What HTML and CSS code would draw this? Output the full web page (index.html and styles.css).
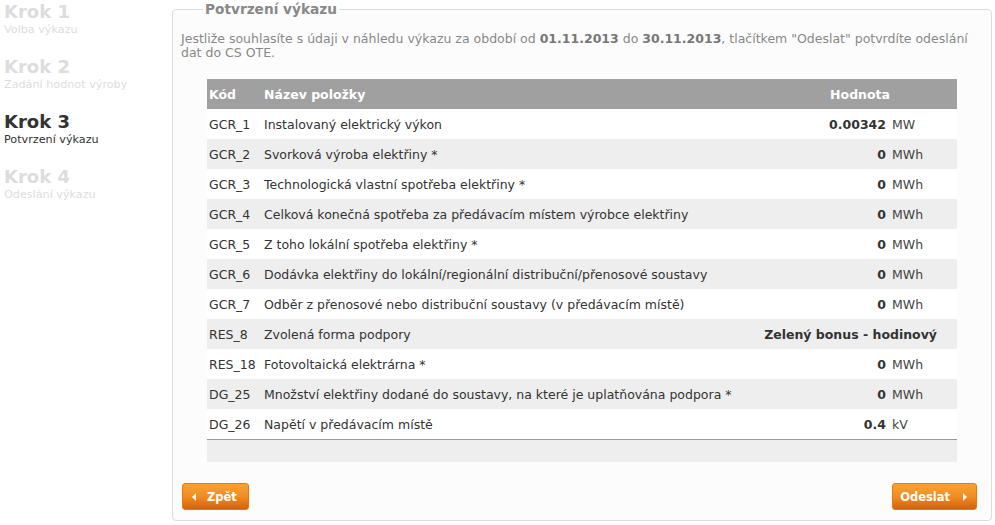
FILE: index.html
```html
<!DOCTYPE html>
<html lang="cs">
<head>
  <meta charset="UTF-8">
  <title>Potvrzení výkazu</title>
  <link rel="stylesheet" href="styles.css">
</head>
<body>
  <div class="page">

    <ul class="steps">
      <li class="step"><span class="step-title">Krok 1</span><span class="step-sub">Volba výkazu</span></li>
      <li class="step"><span class="step-title">Krok 2</span><span class="step-sub">Zadání hodnot výroby</span></li>
      <li class="step active"><span class="step-title">Krok 3</span><span class="step-sub">Potvrzení výkazu</span></li>
      <li class="step"><span class="step-title">Krok 4</span><span class="step-sub">Odeslání výkazu</span></li>
    </ul>

    <fieldset class="box">
      <legend>Potvrzení výkazu</legend>
      <p class="intro">Jestliže souhlasíte s údaji v náhledu výkazu za období od <b>01.11.2013</b> do <b>30.11.2013</b>, tlačítkem "Odeslat" potvrdíte odeslání dat do CS OTE.</p>

      <table class="report">
        <thead>
          <tr>
            <th class="code">Kód</th>
            <th>Název položky</th>
            <th class="val-head" colspan="2">Hodnota</th>
          </tr>
        </thead>
        <tbody>
          <tr><td>GCR_1</td><td>Instalovaný elektrický výkon</td><td class="num">0.00342</td><td class="unit">MW</td></tr>
          <tr><td>GCR_2</td><td>Svorková výroba elektřiny *</td><td class="num">0</td><td class="unit">MWh</td></tr>
          <tr><td>GCR_3</td><td>Technologická vlastní spotřeba elektřiny *</td><td class="num">0</td><td class="unit">MWh</td></tr>
          <tr><td>GCR_4</td><td>Celková konečná spotřeba za předávacím místem výrobce elektřiny</td><td class="num">0</td><td class="unit">MWh</td></tr>
          <tr><td>GCR_5</td><td>Z toho lokální spotřeba elektřiny *</td><td class="num">0</td><td class="unit">MWh</td></tr>
          <tr><td>GCR_6</td><td>Dodávka elektřiny do lokální/regionální distribuční/přenosové soustavy</td><td class="num">0</td><td class="unit">MWh</td></tr>
          <tr><td>GCR_7</td><td>Odběr z přenosové nebo distribuční soustavy (v předávacím místě)</td><td class="num">0</td><td class="unit">MWh</td></tr>
          <tr><td>RES_8</td><td>Zvolená forma podpory</td><td class="num text" colspan="2">Zelený bonus - hodinový</td></tr>
          <tr><td>RES_18</td><td>Fotovoltaická elektrárna *</td><td class="num">0</td><td class="unit">MWh</td></tr>
          <tr><td>DG_25</td><td>Množství elektřiny dodané do soustavy, na které je uplatňována podpora *</td><td class="num">0</td><td class="unit">MWh</td></tr>
          <tr><td>DG_26</td><td>Napětí v předávacím místě</td><td class="num">0.4</td><td class="unit">kV</td></tr>
        </tbody>
        <tfoot>
          <tr><td colspan="4"></td></tr>
        </tfoot>
      </table>

      <div class="actions">
        <button type="button" class="button back"><span class="arrow left"></span>Zpět</button>
        <button type="button" class="button next">Odeslat<span class="arrow right"></span></button>
      </div>
    </fieldset>

  </div>
</body>
</html>
```

FILE: styles.css
```css
body {
  font-family: "DejaVu Sans", Verdana, sans-serif;
  font-size: 12.5px;
  color: #333;
  background-color: #fff;
}
body, html {
  margin: 0;
  padding: 0;
}
.page {
  display: flex;
  height: 525px;
  box-sizing: border-box;
  padding: 0 3px 4px 0;
}
.steps {
  list-style: none;
  margin: 0;
  padding: 1px 0 0 4px;
  width: 168px;
}
.step {
  display: flex;
  flex-direction: column;
  height: 55px;
  color: #ddd;
}
.step-title {
  font-size: 18px;
  font-weight: bold;
  line-height: 22px;
}
.step-sub {
  font-size: 11.2px;
  line-height: 13px;
}
.step.active {
  color: #333;
}
.box {
  flex: 1;
  margin: 1px 0 0 0;
  padding: 0 14px 10px 8px;
  border: 1px solid #ddd;
  border-radius: 4px;
  background-color: #fcfcfc;
  display: flex;
  flex-direction: column;
  min-width: 0;
}
.box legend {
  margin-left: 22px;
  padding: 0 2px;
  font-size: 13.7px;
  font-weight: bold;
  color: #888;
}
.intro {
  margin: 15px -6px 0 0;
  font-size: 12.5px;
  line-height: 14px;
  color: #888;
}
.intro b {
  color: #777;
}
.report {
  margin: 19px 0 0 26px;
  width: 750px;
  border-collapse: collapse;
  font-size: 12.5px;
}
.report th {
  background-color: #a0a0a0;
  color: #fff;
  font-weight: bold;
  text-align: left;
  height: 30px;
  padding: 0 2px;
}
.report th.code {
  width: 51px;
}
.report th.val-head {
  text-align: right;
  padding-right: 67px;
}
.report td {
  height: 30px;
  padding: 0 2px;
  white-space: nowrap;
}
.report tbody tr:nth-child(even) td {
  background-color: #eee;
}
.report tbody tr:nth-child(odd) td {
  background-color: #fff;
}
.report td.num {
  text-align: right;
  font-weight: bold;
}
.report td.unit {
  width: 63px;
  padding-left: 4px;
  color: #444;
}
.report td.text {
  padding-right: 20px;
}
.report tfoot td {
  height: 22px;
  background-color: #eee;
  border-top: 1px solid #999;
}
.actions {
  margin-top: auto;
  display: flex;
  justify-content: space-between;
  padding-left: 1px;
}
.button {
  display: flex;
  align-items: center;
  gap: 11px;
  height: 27px;
  padding: 0 9px;
  border: 1px solid #e57b12;
  border-radius: 3px;
  background: linear-gradient(#f9a233, #f18d23 50%, #d5600c);
  color: #fff;
  font-family: "DejaVu Sans", Verdana, sans-serif;
  font-size: 11.5px;
  font-weight: bold;
}
.button.back {
  width: 67px;
}
.button.next {
  width: 85px;
  justify-content: flex-end;
  gap: 13px;
}
.arrow {
  width: 0;
  height: 0;
  border-top: 4px solid transparent;
  border-bottom: 4px solid transparent;
}
.arrow.left {
  border-right: 4px solid #fff;
}
.arrow.right {
  border-left: 4px solid #fff;
}
```
